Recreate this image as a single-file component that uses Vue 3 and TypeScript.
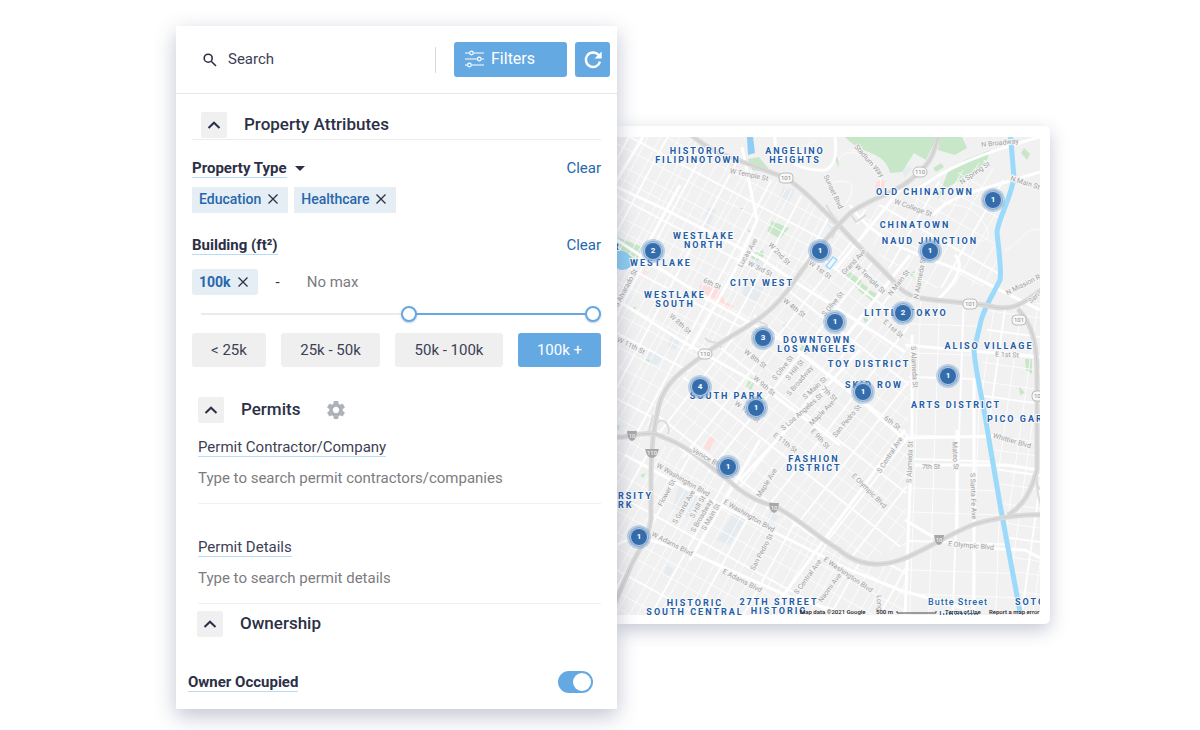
<script setup lang="ts">
import { computed, ref } from 'vue'

interface Chip { id: number; name: string }
interface Pin { x: number; y: number; count: number }
interface AreaLabel { x: number; y: number; lines: string[] }
interface StreetLabel { x: number; y: number; turn: number; name: string }
interface Grid { id: string; outline: string; angle: number; along: number; across: number; major: number }

const search = ref('')
const contractor = ref('')
const details = ref('')
const ownerOccupied = ref(true)
const low = ref(52)
const high = ref(100)

const propertyTypes = ref<Chip[]>([
  { id: 1, name: 'Education' },
  { id: 2, name: 'Healthcare' },
])
const ranges = ['< 25k', '25k - 50k', '50k - 100k', '100k +']
const activeRange = ref('100k +')

const fill = computed(() => ({ left: low.value + '%', width: high.value - low.value + '%' }))

function removeType(id: number) {
  propertyTypes.value = propertyTypes.value.filter((t) => t.id !== id)
}

/* Map frame, in map units */
const frame = { x: 617, y: 137, w: 423, h: 478 }

const pins: Pin[] = [
  { x: 993, y: 200, count: 1 }, { x: 653, y: 251, count: 2 }, { x: 820, y: 251, count: 1 },
  { x: 930, y: 251, count: 1 }, { x: 903, y: 313, count: 2 }, { x: 835, y: 322, count: 1 },
  { x: 763, y: 338, count: 3 }, { x: 948, y: 376, count: 1 }, { x: 700, y: 387, count: 4 },
  { x: 863, y: 392, count: 1 }, { x: 756, y: 408, count: 1 }, { x: 728, y: 467, count: 1 },
  { x: 639, y: 537, count: 1 },
]

function pinPlace(p: Pin) {
  return {
    left: ((p.x - frame.x) / frame.w) * 100 + '%',
    top: ((p.y - frame.y) / frame.h) * 100 + '%',
  }
}

const areas: AreaLabel[] = [
  { x: 698, y: 154, lines: ['HISTORIC', 'FILIPINOTOWN'] },
  { x: 795, y: 154, lines: ['ANGELINO', 'HEIGHTS'] },
  { x: 925, y: 195, lines: ['OLD CHINATOWN'] },
  { x: 915, y: 228, lines: ['CHINATOWN'] },
  { x: 930, y: 244, lines: ['NAUD JUNCTION'] },
  { x: 704, y: 239, lines: ['WESTLAKE', 'NORTH'] },
  { x: 661, y: 266, lines: ['WESTLAKE'] },
  { x: 762, y: 286, lines: ['CITY WEST'] },
  { x: 675, y: 298, lines: ['WESTLAKE', 'SOUTH'] },
  { x: 906, y: 316, lines: ['LITTLE TOKYO'] },
  { x: 817, y: 343, lines: ['DOWNTOWN', 'LOS ANGELES'] },
  { x: 989, y: 349, lines: ['ALISO VILLAGE'] },
  { x: 869, y: 367, lines: ['TOY DISTRICT'] },
  { x: 874, y: 388, lines: ['SKID ROW'] },
  { x: 727, y: 399, lines: ['SOUTH PARK'] },
  { x: 956, y: 408, lines: ['ARTS DISTRICT'] },
  { x: 814, y: 462, lines: ['FASHION', 'DISTRICT'] },
  { x: 617, y: 250, lines: ['R'] },
  { x: 695, y: 606, lines: ['HISTORIC', 'SOUTH CENTRAL'] },
  { x: 779, y: 605, lines: ['27TH STREET', 'HISTORIC'] },
]

const streets: StreetLabel[] = [
  { x: 749, y: 175, turn: 12, name: 'W Temple St' },
  { x: 833, y: 192, turn: 65, name: 'Sunset Blvd' },
  { x: 869, y: 161, turn: 49, name: 'Stadium Way' },
  { x: 913, y: 208, turn: 20, name: 'W College St' },
  { x: 975, y: 173, turn: -34, name: 'N Spring St' },
  { x: 1000, y: 143, turn: -6, name: 'N Broadway' },
  { x: 1025, y: 183, turn: 18, name: 'N Main St' },
  { x: 1025, y: 284, turn: -27, name: 'N Mission Rd' },
  { x: 1034, y: 298, turn: -42, name: 'San' },
  { x: 748, y: 253, turn: -60, name: 'Lucas Ave' },
  { x: 779, y: 254, turn: 46, name: 'W 2nd St' },
  { x: 760, y: 269, turn: 27, name: 'W 3rd St' },
  { x: 820, y: 270, turn: 36, name: 'W 1st St' },
  { x: 712, y: 284, turn: 24, name: '6th St' },
  { x: 854, y: 262, turn: -47, name: 'Grand Ave' },
  { x: 870, y: 279, turn: 44, name: 'W Temple St' },
  { x: 899, y: 283, turn: -52, name: 'N Main St' },
  { x: 920, y: 278, turn: -80, name: 'N Alameda St' },
  { x: 680, y: 324, turn: 42, name: 'W 8th St' },
  { x: 631, y: 346, turn: 26, name: 'W 11th St' },
  { x: 794, y: 308, turn: 38, name: 'W 4th St' },
  { x: 833, y: 304, turn: -50, name: 'S Olive St' },
  { x: 893, y: 329, turn: 42, name: 'E 1st St' },
  { x: 755, y: 359, turn: 38, name: 'W 8th St' },
  { x: 764, y: 386, turn: 40, name: 'W 9th St' },
  { x: 747, y: 412, turn: 38, name: 'W 11th St' },
  { x: 783, y: 368, turn: -52, name: 'S Olive St' },
  { x: 795, y: 370, turn: -50, name: 'S Hill St' },
  { x: 800, y: 381, turn: -50, name: 'S Broadway' },
  { x: 815, y: 388, turn: -42, name: 'S Main St' },
  { x: 802, y: 412, turn: -41, name: 'S Los Angeles St' },
  { x: 822, y: 413, turn: -45, name: 'Maple Ave' },
  { x: 829, y: 394, turn: 43, name: '7th St' },
  { x: 820, y: 439, turn: 48, name: 'E 9th St' },
  { x: 785, y: 443, turn: 38, name: 'E 11th St' },
  { x: 847, y: 421, turn: -50, name: 'San Pedro St' },
  { x: 892, y: 423, turn: 38, name: '6th St' },
  { x: 914, y: 367, turn: 87, name: 'S Alameda St' },
  { x: 1007, y: 355, turn: 3, name: 'E 1st St' },
  { x: 1012, y: 441, turn: 16, name: 'Whittier Blvd' },
  { x: 955, y: 456, turn: 87, name: 'Mateo St' },
  { x: 973, y: 496, turn: 88, name: 'S Santa Fe Ave' },
  { x: 910, y: 462, turn: -88, name: 'S Alameda St' },
  { x: 931, y: 467, turn: 0, name: '7th St' },
  { x: 890, y: 455, turn: -57, name: 'S Central Ave' },
  { x: 869, y: 491, turn: 45, name: 'E Olympic Blvd' },
  { x: 971, y: 546, turn: 5, name: 'E Olympic Blvd' },
  { x: 708, y: 459, turn: 30, name: 'Venice Blvd' },
  { x: 683, y: 480, turn: 30, name: 'W Washington Blvd' },
  { x: 667, y: 493, turn: -62, name: 'Flower St' },
  { x: 684, y: 507, turn: -60, name: 'S Grand Ave' },
  { x: 698, y: 507, turn: -60, name: 'S Hill St' },
  { x: 702, y: 516, turn: -60, name: 'S Broadway' },
  { x: 711, y: 517, turn: -60, name: 'S Main St' },
  { x: 767, y: 483, turn: -58, name: 'Maple Ave' },
  { x: 749, y: 516, turn: 30, name: 'E Washington Blvd' },
  { x: 762, y: 552, turn: -62, name: 'San Pedro St' },
  { x: 672, y: 544, turn: 27, name: 'W Adams Blvd' },
  { x: 742, y: 581, turn: 27, name: 'E Adams Blvd' },
  { x: 808, y: 577, turn: -54, name: 'S Central Ave' },
  { x: 830, y: 588, turn: -54, name: 'Naomi Ave' },
  { x: 848, y: 575, turn: 34, name: 'E Washington Blvd' },
  { x: 879, y: 603, turn: 88, name: 'Long' },
  { x: 626, y: 288, turn: -62, name: 'S Alvarado St' },
]

const grids: Grid[] = [
  { id: 'westlake', outline: '600,120 690,137 815,203 838,225 790,285 705,355 660,400 652,440 600,437', angle: 28, along: 15, across: 9, major: 4 },
  { id: 'downtown', outline: '838,225 905,295 910,340 908,440 905,545 860,562 800,530 730,485 652,440 660,400 705,355 790,285', angle: 38, along: 15, across: 11, major: 3 },
  { id: 'south', outline: '600,437 690,450 772,508 860,562 905,562 908,640 600,640', angle: 29, along: 17, across: 10, major: 4 },
  { id: 'arts', outline: '910,300 984,310 975,345 977,375 990,440 1000,500 1022,640 905,640', angle: 2, along: 27, across: 22, major: 3 },
  { id: 'east', outline: '990,310 1060,300 1060,640 1026,640 1000,480 980,375', angle: 8, along: 17, across: 14, major: 4 },
  { id: 'chinatown', outline: '850,215 920,190 985,160 1008,185 994,240 1000,285 905,290', angle: 30, along: 22, across: 13, major: 4 },
]

/* Parallel streets in both directions, turned by the grid's angle around the map's centre. */
function gridLines(g: Grid, major: boolean) {
  const parts: string[] = []
  const reach = 420
  const wobble = (i: number) => ((i * 7 + 50000) % 5) - 2
  const turn = (x: number, y: number) => {
    const a = (g.angle * Math.PI) / 180
    return (828 + x * Math.cos(a) - y * Math.sin(a)).toFixed(1) + ' ' + (376 + x * Math.sin(a) + y * Math.cos(a)).toFixed(1)
  }
  for (let i = -40; i <= 40; i++) {
    if ((i % g.major === 0) !== major) continue
    const y = i * g.along + wobble(i)
    const x = i * g.across + wobble(i + 3)
    parts.push(`M${turn(-reach, y)}L${turn(reach, y)}`)
    parts.push(`M${turn(x, -reach)}L${turn(x, reach)}`)
  }
  return parts.join('')
}

const freeways = [
  'M685 130C705 147 717 153 735 159L786 178C805 190 818 206 838 224C858 247 880 266 897 285C907 297 920 299 945 301L985 305C1010 312 1020 307 1045 287',
  'M940 130C935 150 931 163 919 172C900 193 870 198 850 213C835 228 815 252 798 276C785 296 772 310 757 320C735 335 720 342 705 354C680 372 665 383 659 405C654 425 651 450 651 475V520C648 540 638 550 630 568L612 610',
  'M610 437C630 440 645 427 665 438C690 447 710 467 728 480C742 493 757 502 772 505C797 517 820 539 838 549C858 566 880 567 900 560C925 551 948 534 975 524C1000 517 1020 514 1045 515',
  'M1018 309C1033 325 1037 345 1037 375V470C1031 492 1023 506 1008 515',
]
const ramps = 'M655 428C660 412 672 425 668 434M653 415 648 436M705 338C712 346 716 338 721 348M757 320 768 326M850 213 856 222 866 215M838 224 832 238M826 205 838 224M1040 490 1033 475M1037 470C1036 495 1040 505 1045 512'

const mainRoads = [
  'M617 187L660 207L760 258L800 285L840 310L905 352',
  'M617 240L700 295L790 345L860 400L905 440',
  'M617 300L680 340L760 385L840 445',
  'M643 137L617 180M680 185L617 300M742 147L757 220L735 270L690 350',
  'M617 545C640 530 660 545 690 552L790 597L850 615',
  'M625 455L690 490L770 530L850 570L900 590L970 610',
  'M905 345L960 350L1040 357M905 438L1000 436M915 465H1005L1040 470M912 335V440L905 615',
  'M905 520L930 535L975 548L1025 550L1040 558M974 380V615M957 430V530',
  'M910 195C930 180 955 160 1040 137M850 205C870 235 900 250 960 270L1040 310M955 255C970 270 940 300 935 300',
  'M1040 172L1013 180C980 190 950 195 933 215',
  'M835 270L900 190L915 175M835 350L910 255M740 480L860 350M690 560L760 440M780 600L905 430',
  'M775 137C772 155 800 172 825 170C840 165 835 140 835 137',
]
const lanes = [
  'M817 140C790 150 805 165 820 160M825 185C850 175 860 185 845 205M838 160C845 145 870 155 880 172',
  'M940 200C960 210 970 200 985 225S960 240 950 235M1005 250C1020 245 1025 225 1040 230M880 190C885 170 865 150 850 150',
]
</script>

<template>
  <main class="page">
    <section class="panel" aria-label="Filters">
      <header class="bar">
        <label class="search">
          <svg class="search-icon" viewBox="0 0 14 14" aria-hidden="true">
            <circle cx="5.2" cy="5.2" r="4" />
            <path d="M8.2 8.2 13 13" />
          </svg>
          <input v-model="search" type="text" placeholder="Search" aria-label="Search" />
        </label>
        <span class="divider"></span>
        <button class="primary filters" type="button">
          <svg viewBox="0 0 19 18" aria-hidden="true">
            <path d="M0 3H4.5M8.500 3H19M0 9H12M16.500 9H19M0 15H2.500M6.500 15H19" />
            <circle cx="6.500" cy="3" r="1.800" />
            <circle cx="14.300" cy="9" r="1.800" />
            <circle cx="4.400" cy="15" r="1.800" />
          </svg>
          <span>Filters</span>
        </button>
        <button class="primary refresh" type="button" aria-label="Refresh">
          <svg viewBox="0 0 20 20" aria-hidden="true">
            <path class="arc" d="M15.600 5.100A7.200 7.200 0 1 0 17 11.600" />
            <path class="tip" d="M18.700 1.500V8.600H11.500Z" />
          </svg>
        </button>
      </header>

      <div class="body">
        <div class="head attributes">
          <button class="toggle" type="button" aria-label="Collapse Property Attributes">
            <svg viewBox="0 0 14 8" aria-hidden="true"><path d="M1.500 7 7 1.700 12.500 7" /></svg>
          </button>
          <h2>Property Attributes</h2>
        </div>

        <div class="row type-row">
          <button class="term type" type="button">Property Type</button>
          <svg class="caret" viewBox="0 0 10 5" aria-hidden="true"><path d="M0 0H10L5 5Z" /></svg>
          <button class="clear" type="button" @click="propertyTypes = []">Clear</button>
        </div>
        <div class="chips">
          <span v-for="t in propertyTypes" :key="t.id" class="chip">
            {{ t.name }}
            <button type="button" :aria-label="'Remove ' + t.name" @click="removeType(t.id)">
              <svg viewBox="0 0 10 10" aria-hidden="true"><path d="M.5.5 9.500 9.500M9.500.5.5 9.500" /></svg>
            </button>
          </span>
        </div>

        <div class="row building-row">
          <span class="term">Building (ft²)</span>
          <button class="clear" type="button" @click="low = 0">Clear</button>
        </div>
        <div class="bounds">
          <span class="chip round">
            100k
            <button type="button" aria-label="Remove minimum">
              <svg viewBox="0 0 10 10" aria-hidden="true"><path d="M.5.5 9.500 9.500M9.500.5.5 9.500" /></svg>
            </button>
          </span>
          <span class="dash">-</span>
          <span class="nomax">No max</span>
        </div>
        <div class="slider">
          <div class="track"><div class="fill" :style="fill"></div></div>
          <input v-model.number="low" type="range" min="0" max="100" aria-label="Minimum building size" />
          <input v-model.number="high" type="range" min="0" max="100" aria-label="Maximum building size" />
        </div>
        <div class="ranges">
          <button v-for="r in ranges" :key="r" type="button" :class="{ active: r === activeRange }" @click="activeRange = r">{{ r }}</button>
        </div>

        <div class="head permits">
          <button class="toggle" type="button" aria-label="Collapse Permits">
            <svg viewBox="0 0 14 8" aria-hidden="true"><path d="M1.500 7 7 1.700 12.500 7" /></svg>
          </button>
          <h2>Permits</h2>
          <button class="gear" type="button" aria-label="Permit settings">
            <svg viewBox="2 2 20 20" aria-hidden="true">
              <path d="M19.430 12.980c.04-.32.07-.64.07-.98s-.03-.66-.07-.98l2.110-1.650c.19-.15.24-.42.12-.64l-2-3.460c-.12-.22-.39-.3-.61-.22l-2.490 1c-.52-.4-1.080-.73-1.690-.98l-.38-2.650C14.460 2.180 14.250 2 14 2h-4c-.25 0-.46.18-.49.42l-.38 2.650c-.61.25-1.170.59-1.690.98l-2.490-1c-.23-.09-.49 0-.61.22l-2 3.460c-.13.22-.07.49.12.64l2.110 1.650c-.04.32-.07.65-.07.98s.03.66.07.98l-2.110 1.650c-.19.15-.24.42-.12.64l2 3.460c.12.22.39.3.61.22l2.490-1c.52.4 1.080.73 1.690.98l.38 2.650c.03.24.24.42.49.42h4c.25 0 .46-.18.49-.42l.38-2.650c.61-.25 1.170-.59 1.690-.98l2.490 1c.23.09.49 0 .61-.22l2-3.460c.12-.22.07-.49-.12-.64l-2.110-1.650zM12 15.500c-1.930 0-3.500-1.570-3.500-3.500s1.570-3.500 3.500-3.500 3.500 1.570 3.500 3.500-1.570 3.500-3.500 3.500z" />
            </svg>
          </button>
        </div>
        <div class="field first">
          <label class="term plain" for="contractor">Permit Contractor/Company</label>
          <input id="contractor" v-model="contractor" type="text" placeholder="Type to search permit contractors/companies" />
        </div>
        <div class="field second">
          <label class="term plain" for="details">Permit Details</label>
          <input id="details" v-model="details" type="text" placeholder="Type to search permit details" />
        </div>

        <div class="head ownership">
          <button class="toggle" type="button" aria-label="Collapse Ownership">
            <svg viewBox="0 0 14 8" aria-hidden="true"><path d="M1.500 7 7 1.700 12.500 7" /></svg>
          </button>
          <h2>Ownership</h2>
        </div>
      </div>
      <div class="owner">
        <label class="term" for="owner">Owner Occupied</label>
        <input id="owner" v-model="ownerOccupied" class="switch" type="checkbox" role="switch" />
      </div>
    </section>

    <section class="map-card" aria-label="Map">
      <div class="map">
        <svg class="tiles" viewBox="617 137 423 478" preserveAspectRatio="xMidYMid slice">
          <defs>
            <clipPath v-for="g in grids" :id="'clip-' + g.id" :key="g.id"><polygon :points="g.outline" /></clipPath>
          </defs>
          <rect class="land" x="617" y="137" width="423" height="478" />

          <g class="block">
            <path d="M783 187 795 190 789 203 779 199ZM708 208 717 209 708 228 702 226ZM830 210 838 218 832 232 826 222ZM672 510 680 480 700 492 688 518 674 508ZM722 532 735 510 748 515 730 545 716 540ZM667 565 674 569 670 577 664 574ZM754 257 766 262 760 271 750 265ZM650 350 664 355 657 365 646 361ZM770 512 779 516 773 524 767 520ZM900 165 912 168 905 178ZM745 282 765 288 757 302 742 296ZM671 335 681 339 675 350 668 346Z" />
          </g>
          <g class="clinic">
            <path d="M877 181 885 180 884 189 875 188ZM700 284 720 290 726 305 718 304 709 298 699 291ZM725 302 734 306 729 311 722 307ZM709 436 715 439 709 451 704 448ZM729 163 740 167 732 166ZM644 270 649 272 642 280Z" />
          </g>
          <g class="park">
            <path d="M845 137H937L926 160 914 153 902 172 890 173C885 150 862 156 845 137ZM940 137H962L967 148 955 155 938 150ZM940 192 948 172 965 160 990 150 986 164 964 178 943 190 937 201ZM933 168 941 163 944 167 936 172ZM1024 148 1030 154 1027 160 1021 153ZM748 159 759 157 772 173 752 170ZM772 221 789 228 780 239 767 231ZM752 254 763 250 764 256 757 261 751 258ZM617 237 642 247 637 260 622 255ZM838 157 839 168 835 159ZM844 276 850 272 862 281 857 288ZM862 283 869 288 864 295 858 290ZM870 290 877 294 872 301 866 296ZM863 317 869 320 865 323ZM909 273 915 271 914 279ZM783 325 788 322 785 330ZM750 377 756 379 751 390 746 387ZM645 359 651 360 650 363ZM633 307 636 307 634 312ZM1025 359 1032 359 1032 374 1026 370ZM1019 386 1025 393 1020 395ZM802 345 811 349 805 355 799 351ZM617 425 620 426 618 431ZM630 500 636 503 632 508ZM640 475 646 473 643 478ZM748 229 752 232 748 233ZM738 208 744 208 741 210Z" />
          </g>

          <g v-for="g in grids" :key="g.id" :clip-path="'url(#clip-' + g.id + ')'">
            <path class="minor" :d="gridLines(g, false)" />
            <path class="major" :d="gridLines(g, true)" />
          </g>
          <path v-for="d in lanes" :key="d" class="minor" :d="d" />
          <path v-for="d in mainRoads" :key="d" class="road" :d="d" />

          <path class="river" d="M1010 130 1014 178C1010 200 998 220 997 232 998 245 1002 270 1000 280 990 300 982 312 980 325L974 350C975 370 984 405 989 440L1001 510 1020 612" />
          <path class="lake" d="M747 137H753L755 153 748 155ZM617 250C627 250 633 257 633 264 628 271 620 271 617 268Z" />
          <path class="pond" d="M833 257 837 260 830 269 826 266Z" />

          <path class="ramp" :d="ramps" />
          <g v-for="(d, i) in freeways" :key="i">
            <path class="freeway" :d="d" />
            <path class="median" :d="d" />
          </g>

          <g class="shield">
            <rect x="779" y="173" width="14" height="10" rx="4" /><text x="786" y="180">101</text>
            <rect x="913" y="167" width="14" height="10" rx="5" /><text x="920" y="174">110</text>
            <rect x="698" y="349" width="14" height="10" rx="5" /><text x="705" y="356">110</text>
            <rect x="963" y="299" width="14" height="10" rx="4" /><text x="970" y="306">101</text>
            <rect x="1012" y="315" width="14" height="10" rx="4" /><text x="1019" y="322">101</text>
            <rect x="1032" y="391" width="14" height="10" rx="4" /><text x="1039" y="398">101</text>
          </g>
          <g class="interstate">
            <path d="M627 431H637L636 437Q635 440 632 441 629 440 628 437ZM645 449H659L657 455Q655 458 652 458 649 458 647 455ZM769 503H779L778 509Q777 512 774 513 771 512 770 509ZM934 535H944L943 541Q942 544 939 545 936 544 935 541Z" />
            <text x="632" y="438">10</text><text x="652" y="455">110</text><text x="774" y="510">10</text><text x="939" y="542">10</text>
          </g>

          <text v-for="s in streets" :key="s.name + s.x" class="street" :transform="`translate(${s.x} ${s.y}) rotate(${s.turn})`" y="2">{{ s.name }}</text>

          <text v-for="a in areas" :key="a.lines[0] + a.x + a.y" class="area">
            <tspan v-for="(l, i) in a.lines" :key="l" :x="a.x" :y="a.y + i * 9">{{ l }}</tspan>
          </text>
          <text class="area start" x="618" y="499">RSITY</text>
          <text class="area start" x="618" y="508">RK</text>
          <text class="area start" x="987" y="422">PICO GARDENS</text>
          <text class="area start" x="1015" y="605">SOTO</text>
          <text class="station" x="958" y="605">Butte Street</text>
          <text class="station" x="958" y="618">Junction</text>

          <g class="credits">
            <text x="800" y="614">Map data ©2021 Google</text>
            <text x="876" y="614">500 m</text>
            <path d="M897 611V613H936V611" />
            <a href="#terms"><text x="945" y="614">Terms of Use</text></a>
            <a href="#report"><text x="989" y="614">Report a map error</text></a>
          </g>
        </svg>
        <button v-for="p in pins" :key="p.x + '-' + p.y" class="pin" type="button" :style="pinPlace(p)">{{ p.count }}</button>
      </div>
    </section>
  </main>
</template>

<style>
body {
  margin: 0;
  background: #fff;
}
</style>

<style scoped>
.page {
  display: grid;
  grid-template-columns: 441fr 433fr;
  align-items: start;
  padding: 26px 150px 21px 176px;
  font-family: Roboto, "Liberation Sans", sans-serif;
  font-size: 15px;
  line-height: 18px;
  color: #2c3046;
}
button,
input {
  font: inherit;
  color: inherit;
  padding: 0;
  margin: 0;
  border: 0;
  background: none;
}
button {
  cursor: pointer;
}
.panel {
  position: relative;
  z-index: 1;
  background: #fff;
  box-shadow: 0 7px 20px rgba(50, 60, 105, 0.3);
}
.bar {
  display: flex;
  align-items: center;
  padding: 16px 7px 16px 27px;
  border-bottom: 1px solid #e6e6e8;
}
.search {
  flex: 1;
  min-width: 0;
  display: flex;
  align-items: center;
  gap: 11px;
}
.search-icon {
  width: 14px;
  height: 14px;
  flex: none;
  fill: none;
  stroke: #2c3046;
  stroke-width: 1.6;
}
.search input {
  flex: 1;
  min-width: 0;
  padding-bottom: 2px;
  outline: none;
}
.search input::placeholder {
  color: #3c4054;
  opacity: 1;
}
.divider {
  width: 1px;
  height: 26px;
  margin-right: 18px;
  background: #d3d9df;
}
.primary {
  display: flex;
  align-items: center;
  height: 35px;
  border-radius: 3px;
  background: #65a9e3;
  color: #fff;
}
.filters {
  width: 113px;
  gap: 7px;
  padding-left: 11px;
  margin-right: 8px;
  font-size: 16px;
}
.filters span,
.filters svg {
  margin-bottom: 2px;
}
.filters svg {
  width: 19px;
  height: 18px;
  fill: none;
  stroke: #fff;
  stroke-width: 1.2;
}
.refresh {
  width: 35px;
  justify-content: center;
}
.refresh svg {
  width: 20px;
  height: 20px;
}
.arc {
  fill: none;
  stroke: #fff;
  stroke-width: 2.4;
}
.tip {
  fill: #fff;
}
.body {
  padding: 18px 16px 0;
}
.head {
  display: flex;
  align-items: center;
  gap: 17px;
}
.attributes {
  padding: 0 0 1px 9px;
  border-bottom: 1px solid #ececee;
}
.permits {
  margin-top: 30px;
  padding-left: 6px;
}
.ownership {
  margin-top: 7px;
  padding-left: 5px;
}
.head h2 {
  margin: 0 0 2px;
  font-size: 17px;
  line-height: 24px;
  font-weight: 500;
}
.toggle {
  display: grid;
  place-items: center;
  width: 26px;
  height: 26px;
  border-radius: 2px;
  background: #f0f0f1;
}
.toggle svg {
  width: 14px;
  height: 8px;
  fill: none;
  stroke: #2c3046;
  stroke-width: 2;
}
.gear {
  display: flex;
  margin-left: 10px;
}
.gear svg {
  width: 18px;
  height: 18px;
  fill: #adb1ba;
}
.row {
  display: flex;
  align-items: flex-start;
}
.type-row {
  margin-top: 19px;
}
.building-row {
  margin-top: 23px;
}
.term {
  font-weight: 700;
  line-height: 18px;
  border-bottom: 1px solid #b9dcf6;
}
.plain {
  font-weight: 400;
  color: #3c4054;
}
.caret {
  align-self: center;
  width: 10px;
  height: 5px;
  margin-left: 8px;
  fill: #2c3046;
}
.clear {
  margin-left: auto;
  color: #2767ac;
}
.chips {
  display: flex;
  gap: 6px;
  margin-top: 9px;
}
.chip {
  display: flex;
  align-items: center;
  gap: 7px;
  box-sizing: border-box;
  height: 26px;
  padding: 0 10px 2px 7px;
  background: #e5edf5;
  color: #2767ac;
  font-size: 14px;
  font-weight: 500;
}
.chip button {
  display: flex;
}
.chip svg {
  width: 10px;
  height: 10px;
  fill: none;
  stroke: #2c3046;
  stroke-width: 1.3;
}
.round {
  padding-bottom: 0;
  border-radius: 3px;
  font-weight: 700;
}
.bounds {
  display: flex;
  align-items: center;
  margin-top: 14px;
}
.dash {
  margin: 0 27px 0 18px;
}
.nomax {
  color: #7c7c80;
}
.slider {
  position: relative;
  height: 18px;
  margin: 10px 0 0 9px;
}
.track {
  position: relative;
  top: 8px;
  height: 2px;
  background: #ebebec;
}
.fill {
  position: absolute;
  height: 2px;
  background: #65a9e3;
}
.slider input {
  position: absolute;
  inset: 0;
  width: 100%;
  height: 18px;
  appearance: none;
  pointer-events: none;
}
.slider input::-webkit-slider-thumb {
  appearance: none;
  box-sizing: border-box;
  width: 16px;
  height: 16px;
  border: 2px solid #65a9e3;
  border-radius: 50%;
  background: #fff;
  box-shadow: 0 1px 2px rgba(60, 80, 120, 0.3);
  pointer-events: auto;
}
.ranges {
  display: grid;
  grid-template-columns: 74fr 99fr 108fr 83fr;
  gap: 15px;
  margin-top: 10px;
}
.ranges button {
  height: 34px;
  border-radius: 3px;
  background: #efeff0;
  color: #3c4054;
}
.ranges .active {
  background: #65a9e3;
  color: #fff;
}
.field {
  display: flex;
  flex-direction: column;
  align-items: flex-start;
  margin-left: 6px;
  padding-bottom: 15px;
  border-bottom: 1px solid #f0f0f2;
}
.first {
  margin-top: 15px;
}
.second {
  margin-top: 34px;
}
.field input {
  width: 100%;
  height: 20px;
  margin-top: 11px;
  outline: none;
}
.field input::placeholder {
  color: #7c7c80;
  opacity: 1;
}
.owner {
  display: flex;
  align-items: center;
  justify-content: space-between;
  padding: 34px 24px 16px 12px;
}
.switch {
  appearance: none;
  width: 35px;
  height: 22px;
  padding: 2px;
  box-sizing: border-box;
  border-radius: 11px;
  background: #b9bdc6;
  display: flex;
  cursor: pointer;
}
.switch::before {
  content: "";
  width: 18px;
  height: 18px;
  border-radius: 50%;
  background: #fff;
}
.switch:checked {
  background: #65a9e3;
  justify-content: flex-end;
}
.map-card {
  margin-top: 100px;
  padding: 11px 10px 9px 0;
  border-radius: 0 5px 5px 0;
  background: #fff;
  box-shadow: 0 6px 18px rgba(50, 60, 105, 0.28);
}
.map {
  position: relative;
}
.tiles {
  display: block;
  width: 100%;
}
.land {
  fill: #f1f1f1;
}
.block {
  fill: #e6ebf0;
}
.clinic {
  fill: #fbdedd;
}
.park {
  fill: #c8e7c8;
}
.minor,
.major,
.road,
.ramp {
  fill: none;
  stroke: #fff;
}
.minor {
  stroke-width: 1;
  opacity: 0.8;
}
.major {
  stroke-width: 2;
  opacity: 0.9;
}
.road {
  stroke-width: 3;
}
.ramp {
  stroke: #dcdcdc;
  stroke-width: 2;
}
.river {
  fill: none;
  stroke: #9bdafa;
  stroke-width: 5;
}
.lake {
  fill: #90cdf2;
}
.pond {
  fill: #f1f7fb;
  stroke: #9bdafa;
  stroke-width: 1.5;
}
.freeway {
  fill: none;
  stroke: #dadada;
  stroke-width: 5;
}
.median {
  fill: none;
  stroke: #cdcdcd;
  stroke-width: 1;
}
.shield {
  fill: #f8f8f8;
  stroke: #bcbcbc;
  stroke-width: 1;
  font-size: 6px;
  text-anchor: middle;
}
.shield text {
  fill: #8a8a8a;
  stroke: none;
}
.interstate {
  fill: #a8a8a8;
  font-size: 6px;
  text-anchor: middle;
}
.interstate text {
  fill: #fff;
}
.street {
  fill: #a0a0a0;
  stroke: #f6f6f6;
  stroke-width: 2;
  paint-order: stroke;
  font-size: 7px;
  text-anchor: middle;
}
.area {
  fill: #1f5da8;
  stroke: #fafafa;
  stroke-width: 2;
  paint-order: stroke;
  font-size: 9px;
  font-weight: 700;
  letter-spacing: 2px;
  text-anchor: middle;
}
.start {
  text-anchor: start;
}
.station {
  fill: #2767ac;
  stroke: #fafafa;
  stroke-width: 2;
  paint-order: stroke;
  font-size: 9px;
  font-weight: 500;
  letter-spacing: 1px;
  text-anchor: middle;
}
.credits {
  fill: #222;
  font-size: 6px;
  font-weight: 500;
}
.credits path {
  fill: none;
  stroke: #444;
  stroke-width: 1;
}
.pin {
  position: absolute;
  width: 16px;
  height: 16px;
  margin: -8px 0 0 -8px;
  border-radius: 50%;
  background: #356cac;
  color: #fff;
  font-size: 8px;
  font-weight: 700;
  line-height: 16px;
  text-align: center;
  box-shadow: 0 0 0 1px #b3cae2, 0 0 0 2px #86abd1, 0 0 0 4px rgba(110, 155, 205, 0.4);
}
</style>
